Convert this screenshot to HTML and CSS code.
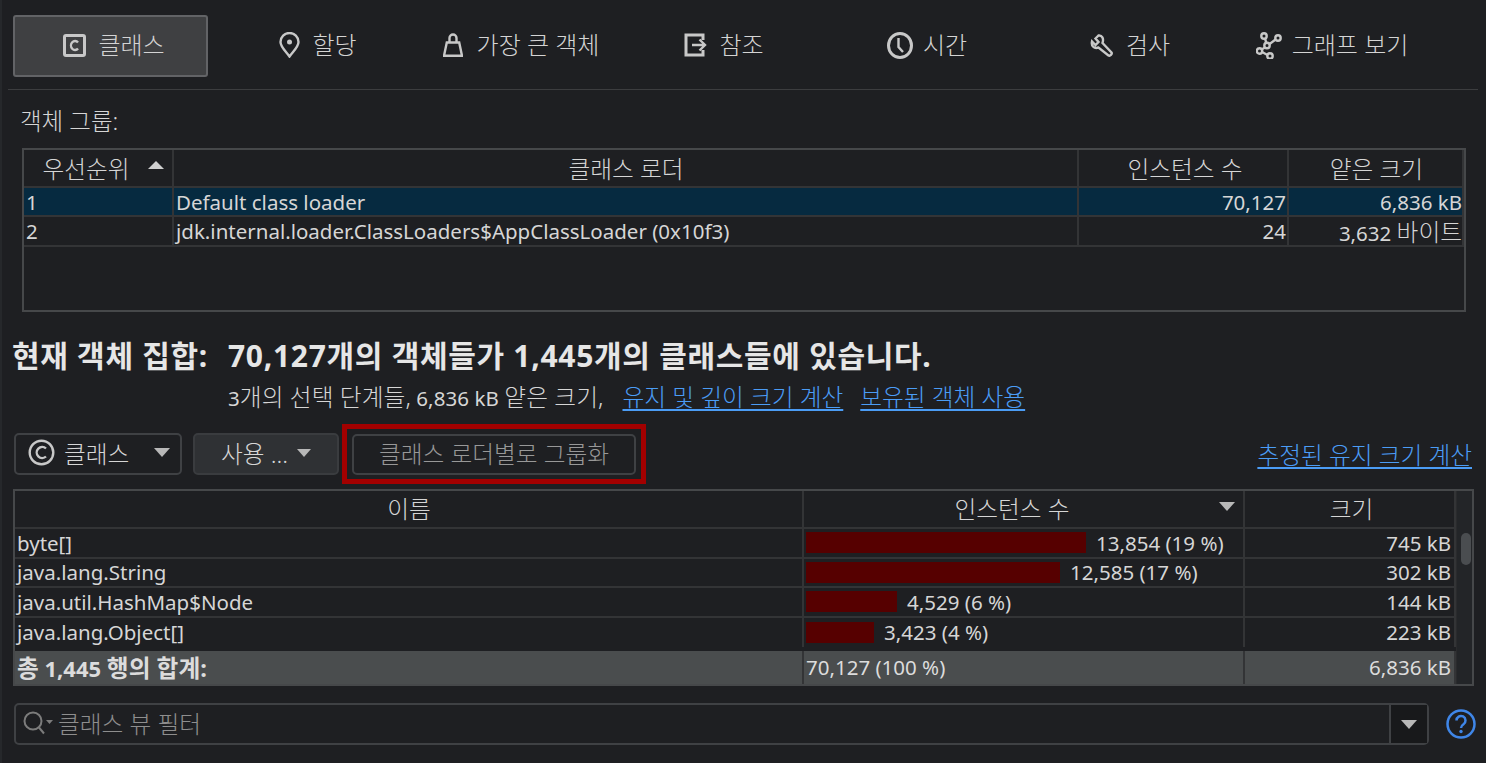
FILE: index.html
```html
<!DOCTYPE html>
<html lang="ko">
<head>
<meta charset="utf-8">
<title>클래스</title>
<link rel="stylesheet" href="styles.css">
</head>
<body>
<div class="window">
  <nav class="tabs">
    <div class="tab active">
      <svg class="ico" width="23" height="23" viewBox="0 0 23 23"><rect class="thick" x="1.500" y="1.500" width="20" height="20" rx="1.500"/><path d="M15 8.500a4 4.500 0 1 0 0 6"/></svg>
      <span>클래스</span>
    </div>
    <div class="tab shifted">
      <svg class="ico" width="21" height="26" viewBox="0 0 21 26"><path d="M10.500 24.500C7 19.500 1.500 15 1.500 10a9 9 0 0 1 18 0C19.500 15 14 19.500 10.500 24.500z"/><circle class="fill" cx="10.500" cy="10" r="2.500"/></svg>
      <span>할당</span>
    </div>
    <div class="tab shifted wide-gap">
      <svg class="ico" width="20" height="24" viewBox="0 0 20 24"><path d="M3.800 9.500h12.400l2.800 13.200H1zM6.500 9.500V5a3.500 3.500 0 0 1 7 0v4.500"/></svg>
      <span>가장 큰 객체</span>
    </div>
    <div class="tab shifted">
      <svg class="ico" width="23" height="24" viewBox="0 0 23 24"><path class="thick" d="M19 7V2H2v20h17v-5"/><path d="M8 12h13M15.500 6.500 21 12l-5.500 5.500"/></svg>
      <span>참조</span>
    </div>
    <div class="tab shifted narrow-gap">
      <svg class="ico" width="26" height="27" viewBox="0 0 26 27"><ellipse class="thick" cx="13" cy="13.500" rx="11.500" ry="12"/><path d="M11.500 6v9l4.500 5"/></svg>
      <span>시간</span>
    </div>
    <div class="tab shifted">
      <svg class="ico" width="24" height="23" viewBox="0 0 24 23"><path d="M8.500 1.500 5.500 4.500l3 3.500-3 3-3.500-3.500C1 12 4 15 8.500 13.500L18.500 21.500c1.500 1 4-1.500 3-3L12.500 9C14 4.500 12 1 8.500 1.500z"/></svg>
      <span>검사</span>
    </div>
    <div class="tab narrow-gap">
      <svg class="ico" width="26" height="27" viewBox="0 0 26 27"><circle cx="8" cy="4" r="2.700"/><circle cx="22" cy="6" r="2.700"/><circle cx="11" cy="13.500" r="2.700"/><circle cx="3.500" cy="19" r="2.700"/><circle cx="14" cy="24" r="2.700"/><path d="M9 6.500l1.300 4.300M13.500 12l6-4.500M9 15.500l-3.500 2M6 20l5.500 3"/></svg>
      <span>그래프 보기</span>
    </div>
  </nav>

  <div class="group-label">객체 그룹:</div>

  <section class="table loaders">
    <div class="row head">
      <div class="cell c-a center sorted">우선순위<i class="tri up"></i></div>
      <div class="cell c-b center">클래스 로더</div>
      <div class="cell c-c center">인스턴스 수</div>
      <div class="cell c-d center">얕은 크기</div>
    </div>
    <div class="row selected r1">
      <div class="cell c-a">1</div>
      <div class="cell c-b">Default class loader</div>
      <div class="cell c-c right">70,127</div>
      <div class="cell c-d right">6,836 kB</div>
    </div>
    <div class="row r2">
      <div class="cell c-a">2</div>
      <div class="cell c-b">jdk.internal.loader.ClassLoaders$AppClassLoader (0x10f3)</div>
      <div class="cell c-c right">24</div>
      <div class="cell c-d right"><span>3,632&nbsp;<span class="ko">바이트</span></span></div>
    </div>
  </section>

  <h1 class="summary"><span class="sum-label">현재 객체 집합:</span><span>70,127개의 객체들가 1,445개의 클래스들에 있습니다.</span></h1>
  <p class="sub"><span class="sub-text">3<span class="ko">개의 선택 단계들,</span> 6,836 kB <span class="ko">얕은 크기,</span></span><a class="link">유지 및 깊이 크기 계산</a><a class="link">보유된 객체 사용</a></p>

  <div class="controls">
    <div class="btn combo">
      <svg class="ico copy" width="27" height="27" viewBox="0 0 27 27"><circle cx="13.500" cy="13.500" r="11.800"/><path d="M18 9.500a5.500 5.500 0 1 0 0 8"/></svg>
      <span>클래스</span><i class="tri down"></i>
    </div>
    <div class="btn use"><span>사용 ...</span><i class="tri down small"></i></div>
    <div class="highlight"><div class="btn ghost">클래스 로더별로 그룹화</div></div>
    <a class="link est">추정된 유지 크기 계산</a>
  </div>

  <section class="table classes">
    <div class="t-main">
      <div class="row head">
        <div class="cell k-a center">이름</div>
        <div class="cell k-b center sorted">인스턴스 수<i class="tri down"></i></div>
        <div class="cell k-c center">크기</div>
      </div>
      <div class="row body-row">
        <div class="cell k-a">byte[]</div>
        <div class="cell k-b"><b class="bar" style="width:280px"></b>13,854 (19 %)</div>
        <div class="cell k-c right">745 kB</div>
      </div>
      <div class="row body-row">
        <div class="cell k-a">java.lang.String</div>
        <div class="cell k-b"><b class="bar" style="width:254px"></b>12,585 (17 %)</div>
        <div class="cell k-c right">302 kB</div>
      </div>
      <div class="row body-row">
        <div class="cell k-a">java.util.HashMap$Node</div>
        <div class="cell k-b"><b class="bar" style="width:91px"></b>4,529 (6 %)</div>
        <div class="cell k-c right">144 kB</div>
      </div>
      <div class="row body-row">
        <div class="cell k-a">java.lang.Object[]</div>
        <div class="cell k-b"><b class="bar" style="width:68px"></b>3,423 (4 %)</div>
        <div class="cell k-c right">223 kB</div>
      </div>
      <div class="row total">
        <div class="cell k-a strong"><span><span class="ko">총</span> 1,445 <span class="ko">행의 합계:</span></span></div>
        <div class="cell k-b">70,127 (100 %)</div>
        <div class="cell k-c right">6,836 kB</div>
      </div>
    </div>
    <div class="scroll"><div class="thumb"></div></div>
  </section>

  <div class="filter-row">
    <div class="filter">
      <div class="filter-input">
        <svg class="search" viewBox="0 0 30 24"><circle cx="10" cy="10" r="8.500"/><path d="M16 16.500l5 6"/><path class="fill" d="M23 9h7l-3.500 4z"/></svg>
        <span>클래스 뷰 필터</span>
      </div>
      <div class="filter-drop"><i class="tri down"></i></div>
    </div>
    <svg class="help" viewBox="0 0 30 30"><circle cx="15" cy="15" r="13.500"/><path d="M10.500 11.500a4.500 4.500 0 1 1 7 3.700c-1.500 1-2.500 1.800-2.500 3.800"/><circle class="dot" cx="15" cy="22.500" r="1.700"/></svg>
  </div>
</div>
</body>
</html>
```

FILE: styles.css
```css
* { box-sizing: border-box; }
html, body { margin: 0; padding: 0; background: #1e1f22; }
body {
  width: 1486px;
  height: 763px;
  overflow: hidden;
  font-family: "Noto Sans", "Noto Sans CJK KR", sans-serif;
  font-size: 20.500px;
  color: #d6d6d6;
}
.window { height: 763px; padding: 15px 0 0; border-left: 2px solid #26282b; }
.ko { font-size: 1.156em; font-weight: 300; }

.tabs {
  display: grid;
  grid-template-columns: repeat(7, 195px);
  column-gap: 8px;
  margin: 0 8px 0 6px;
  padding: 0 0 12px 5px;
  border-bottom: 1px solid #3c3d3f;
  height: 75px;
}
.tab {
  height: 62px;
  display: flex;
  align-items: center;
  justify-content: center;
  gap: 12px;
  padding: 0 0 2px 7px;
  border: 1px solid transparent;
  border-radius: 3px;
  font-size: 24px;
  font-weight: 300;
  line-height: 1;
  color: #d4d4d4;
}
.tab.shifted { padding-left: 9px; }
.tab.active { background: #3f4042; border: 2px solid #626366; }
.wide-gap { gap: 14px; }
.narrow-gap { gap: 10px; }
.ico { flex: none; fill: none; stroke: #c8c8c8; stroke-width: 2.400; }
.ico .fill { fill: #c8c8c8; stroke: none; }
.ico .thick { stroke-width: 3; }

.group-label { margin: 17px 0 0 18px; height: 29px; line-height: 29px; font-size: 23.500px; font-weight: 300; color: #d6d6d6; }

.table { border: 2px solid #46484a; background: #1e1f22; }
.row { display: flex; }
.cell {
  flex: none;
  display: flex;
  align-items: center;
  white-space: nowrap;
  padding: 0 1px 1px 2px;
  border-right: 2px solid #333436;
  border-bottom: 2px solid #333436;
  position: relative;
}
.center { justify-content: center; }
.right { justify-content: flex-end; }
.head .cell { height: 38px; font-size: 23.700px; font-weight: 300; color: #d6d6d6; padding-bottom: 3px; }

.loaders { margin: 12px 20px 0 20px; height: 164px; }
.loaders .cell { padding-bottom: 0; }
.c-a { width: 150px; }
.c-b { width: 905px; }
.c-c { width: 210px; }
.c-d { width: 175px; }
.head .c-c { padding-left: 5px; }
.head .c-d { padding-left: 3px; }
.loaders .c-d.right { padding-right: 0; }
.loaders .row.r1 .cell { height: 29px; }
.loaders .row.r2 .cell { height: 30px; }
.selected .cell { background: #062a40; }

.tri { display: inline-block; flex: none; width: 0; height: 0; border-left: 8px solid transparent; border-right: 8px solid transparent; }
.tri.up { border-bottom: 8px solid #d0d0d0; }
.tri.down { border-top: 9px solid #b8b8b8; }
.tri.small { border-left-width: 7px; border-right-width: 7px; border-top-width: 8px; }
.head .tri { position: absolute; right: 8px; top: 11px; }
.c-a.sorted { padding-right: 26px; }
.k-b.sorted { padding-right: 25px; }

.summary {
  margin: 27px 0 0 10px;
  height: 34px;
  display: flex;
  font-size: 30px;
  letter-spacing: .7px;
  line-height: 34px;
  font-weight: 700;
  color: #e6e6e6;
}
.sum-label { width: 216px; flex: none; }
.sub {
  margin: 9px 0 0 226px;
  height: 30px;
  line-height: 30px;
  display: flex;
  color: #d6d6d6;
}
.sub-text { letter-spacing: .08px; }
.sub .link:first-of-type { margin-left: 19px; }
.sub .link + .link { margin-left: 17px; }
.link { color: #4b9cf5; text-decoration: underline; text-decoration-thickness: 2px; text-underline-offset: 3px; font-size: 23.700px; font-weight: 300; }

.controls { display: flex; align-items: center; height: 60px; margin: 12px 12px 0 12px; }
.btn {
  display: flex;
  align-items: center;
  height: 42px;
  border: 2px solid #3f4144;
  border-radius: 5px;
  font-size: 23.700px;
  font-weight: 300;
}
.combo { width: 168px; padding-left: 12px; gap: 9px; }
.combo .tri { margin-left: 16px; }
.use { width: 146px; margin-left: 11px; background: #2f3134; justify-content: center; gap: 9px; border-color: #3a3c3f; padding-bottom: 3px; }
.combo, .ghost { padding-bottom: 3px; }
.highlight { margin-left: 3px; width: 304px; height: 60px; border: 5px solid #a30000; padding: 5px; display: flex; align-items: center; }
.ghost { width: 100%; height: 41px; justify-content: center; color: #989898; }
.est { margin-left: auto; margin-right: 2px; }

.classes { margin: 5px 12px 0 11px; height: 197px; display: flex; }
.t-main { width: 1441px; flex: none; }
.k-a { width: 789px; }
.k-b { width: 441px; }
.k-c { width: 211px; }
.k-c.right { padding-right: 3px; }
.head .k-c { padding-left: 5px; }
.body-row .cell { height: 30px; }
.body-row:nth-child(3) .cell { height: 29px; }
.body-row:nth-child(5) .cell { border-bottom: none; height: 29px; }
.k-b .bar { display: block; height: 21px; background: #560000; margin-right: 10px; flex: none; }
.total { margin-top: 4px; }
.total .cell { height: 33px; background: #4a4d4e; border-bottom: none; color: #dcdcdc; }
.strong { font-weight: 700; font-size: 22px; }
.strong .ko { font-size: 1.077em; font-weight: 700; }
.scroll { flex: 1; padding: 42px 0 0 4px; border-left: 1px solid #2a2b2d; background: #232528; }
.thumb { width: 10px; height: 32px; background: #4a4d50; border-radius: 5px; }

.filter-row { display: flex; align-items: center; margin: 17px 0 0 12px; }
.filter {
  width: 1415px;
  height: 42px;
  display: flex;
  border: 2px solid #3f4144;
  border-radius: 5px;
}
.filter-input { flex: 1; display: flex; align-items: center; padding: 0 0 2px 7px; gap: 5px; color: #8e8e8e; font-size: 23.700px; font-weight: 300; }
.search { width: 30px; height: 24px; fill: none; stroke: #7c7c7c; stroke-width: 2; }
.search .fill { fill: #7c7c7c; stroke: none; }
.filter-drop { width: 38px; border-left: 2px solid #3f4144; background: #18191b; display: flex; align-items: center; justify-content: center; }
.help { width: 30px; height: 30px; margin-left: 17px; fill: none; stroke: #3f86e8; stroke-width: 2.500; }
.help .dot { fill: #3f86e8; stroke: none; }
```
